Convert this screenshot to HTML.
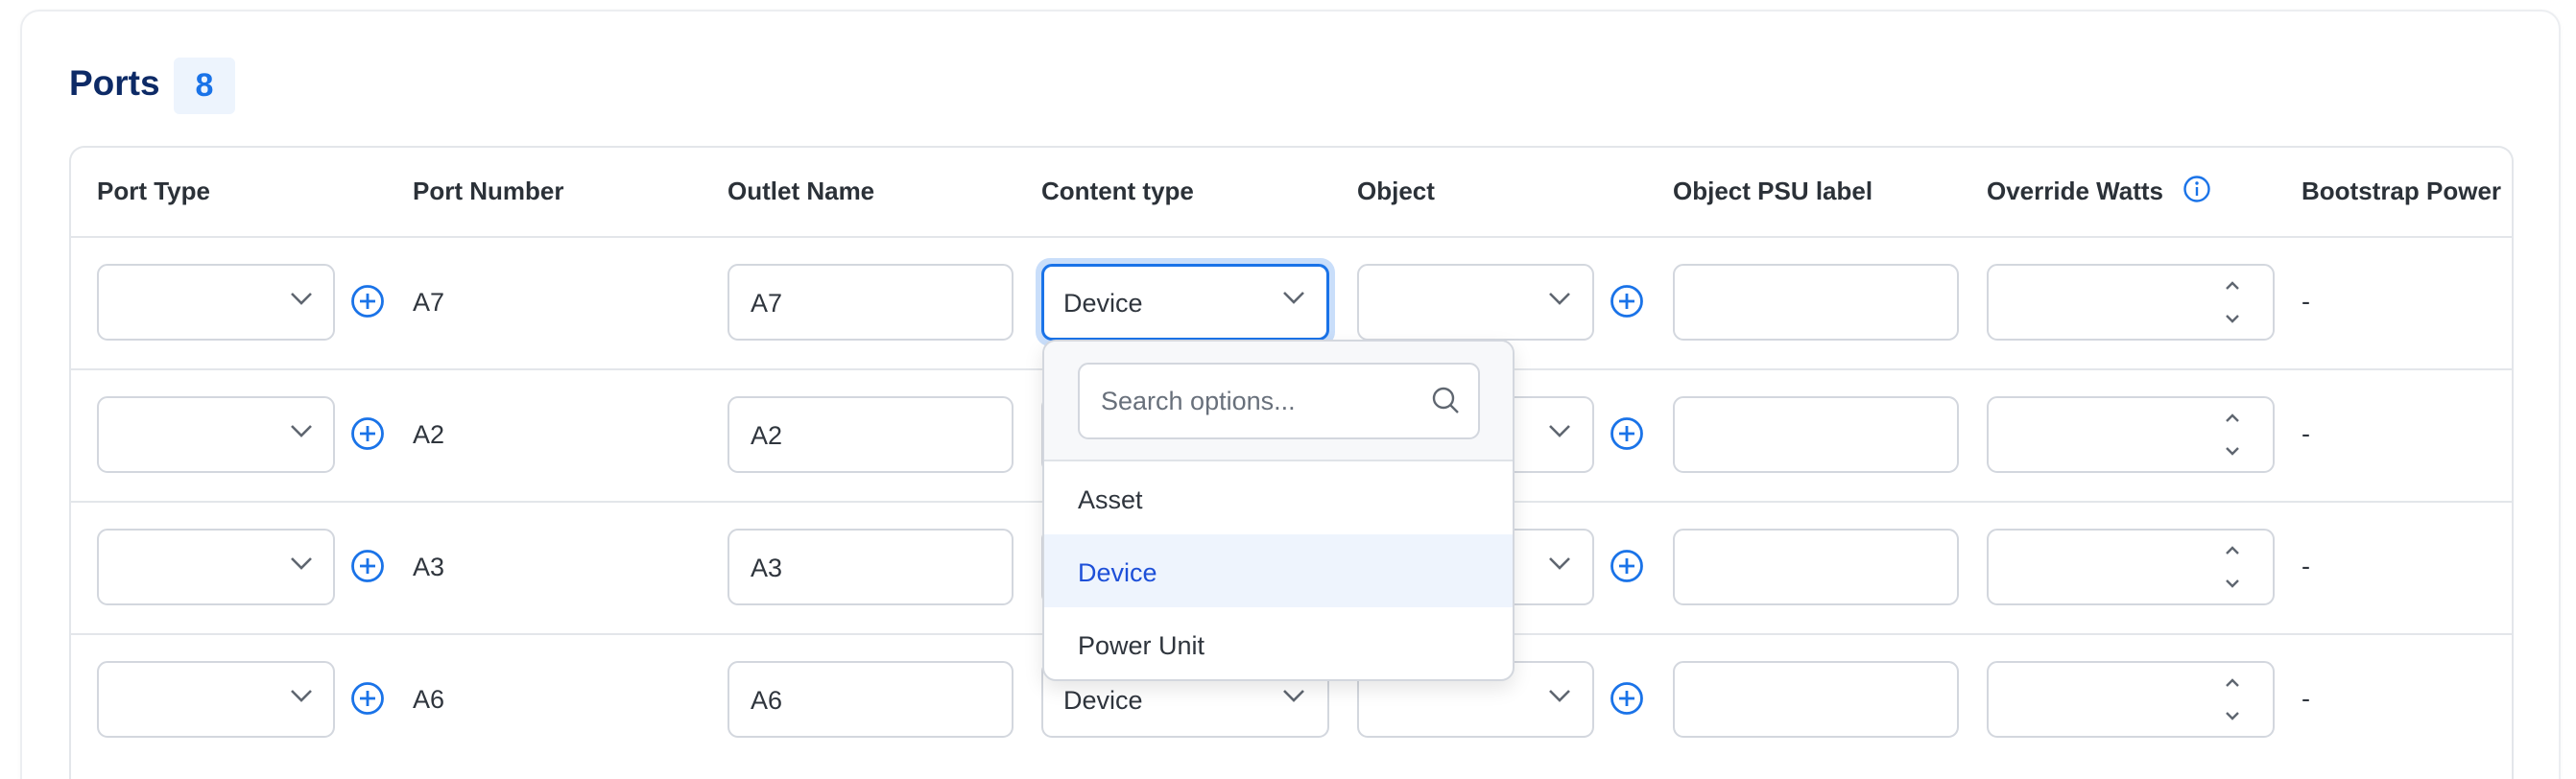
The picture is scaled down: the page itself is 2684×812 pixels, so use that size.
<!DOCTYPE html>
<html style="width:2684px;height:812px;overflow:hidden"><head><meta charset="utf-8"><style>
*{box-sizing:border-box;margin:0;padding:0}
body{width:2684px;height:812px;background:#fff;font-family:"Liberation Sans",Arial,sans-serif;position:relative;overflow:hidden;color:#374151}
.abs{position:absolute}
.card{left:21px;top:10px;width:2647px;height:802px;border:2px solid #eceef1;border-bottom:none;border-radius:20px 20px 0 0;box-shadow:0 1px 4px rgba(0,0,0,.04)}
.title{left:72px;top:66px;font-size:37px;font-weight:bold;color:#0d2a66}
.badge{left:181px;top:60px;width:64px;height:59px;background:#edf4fd;border-radius:6px;color:#1a73e8;font-weight:bold;font-size:34px;text-align:center;line-height:59px}
.table{left:72px;top:152px;width:2547px;height:660px;border:2px solid #e3e6ea;border-bottom:none;border-radius:16px 16px 0 0}
.hd{top:184px;font-size:26px;font-weight:bold;color:#2b3138}
.line{left:72px;width:2547px;height:2px;background:#e3e6ea}
.inp{border:2px solid #d3d7de;border-radius:11px;height:80px;background:#fff}
.chev{position:absolute;top:27px;width:24px;height:14px}
.txt{font-size:27px;color:#2f353d}
</style></head><body>
<div class="abs card"></div>
<div class="abs title">Ports</div>
<div class="abs badge">8</div>
<div class="abs table"></div>
<div class="abs hd" style="left:101px">Port Type</div>
<div class="abs hd" style="left:430px">Port Number</div>
<div class="abs hd" style="left:758px">Outlet Name</div>
<div class="abs hd" style="left:1085px">Content type</div>
<div class="abs hd" style="left:1414px">Object</div>
<div class="abs hd" style="left:1743px">Object PSU label</div>
<div class="abs hd" style="left:2070px">Override Watts</div>
<svg class="abs" style="left:2274px;top:182px" width="30" height="30" viewBox="0 0 30 30"><circle cx="15" cy="15" r="12.5" fill="none" stroke="#1a73e8" stroke-width="2.4"/><line x1="15" y1="13" x2="15" y2="22" stroke="#1a73e8" stroke-width="2.4"/><circle cx="15" cy="9" r="1.7" fill="#1a73e8"/></svg>
<div class="abs hd" style="left:2398px">Bootstrap Power</div>

<div class="abs line" style="top:246px"></div>
<div class="abs line" style="top:384px"></div>
<div class="abs line" style="top:522px"></div>
<div class="abs line" style="top:660px"></div>

<div id="rows"></div>
<script>
var rows=[[275,'A7','A7',''],[413,'A2','A2',''],[551,'A3','A3',''],[689,'A6','A6','Device']];
var chev='<svg class="chev" viewBox="0 0 24 14"><path d="M2 2 L12 12 L22 2" fill="none" stroke="#5f6670" stroke-width="2.6"/></svg>';
var plus='<svg width="36" height="36" viewBox="0 0 36 36"><circle cx="18" cy="18" r="15.5" fill="none" stroke="#1a73e8" stroke-width="2.8"/><path d="M18 10V26M10 18H26" stroke="#1a73e8" stroke-width="2.8"/></svg>';
var h='';
rows.forEach(function(r,i){
 var y=r[0];
 h+='<div class="abs inp" style="left:101px;top:'+y+'px;width:248px">'+chev.replace('class="chev"','class="chev" style="left:199px"')+'</div>';
 h+='<div class="abs" style="left:365px;top:'+(y+21)+'px">'+plus+'</div>';
 h+='<div class="abs txt" style="left:430px;top:'+(y+25)+'px">'+r[1]+'</div>';
 h+='<div class="abs inp" style="left:758px;top:'+y+'px;width:298px"><div class="txt" style="position:absolute;left:22px;top:24px">'+r[2]+'</div></div>';
 if(i==0){
  h+='<div class="abs" style="left:1079px;top:'+(y-6)+'px;width:312px;height:92px;border-radius:15px;background:#c9defa"></div>';
  h+='<div class="abs inp" style="left:1085px;top:'+y+'px;width:300px;border:3px solid #1a73e8"><div class="txt" style="position:absolute;left:20px;top:23px">Device</div>'+chev.replace('class="chev"','class="chev" style="left:248px;top:25px"')+'</div>';
 } else {
  h+='<div class="abs inp" style="left:1085px;top:'+y+'px;width:300px"><div class="txt" style="position:absolute;left:21px;top:24px">'+r[3]+'</div>'+chev.replace('class="chev"','class="chev" style="left:249px"')+'</div>';
 }
 h+='<div class="abs inp" style="left:1414px;top:'+y+'px;width:247px">'+chev.replace('class="chev"','class="chev" style="left:197px"')+'</div>';
 h+='<div class="abs" style="left:1677px;top:'+(y+21)+'px">'+plus+'</div>';
 h+='<div class="abs inp" style="left:1743px;top:'+y+'px;width:298px"></div>';
 h+='<div class="abs inp" style="left:2070px;top:'+y+'px;width:300px"><svg style="position:absolute;left:244px;top:14px" width="20" height="48" viewBox="0 0 20 48"><path d="M4 10L10 4L16 10" fill="none" stroke="#5f6670" stroke-width="2.4"/><path d="M4 38L10 44L16 38" fill="none" stroke="#5f6670" stroke-width="2.4"/></svg></div>';
 h+='<div class="abs txt" style="left:2398px;top:'+(y+24)+'px">-</div>';
});
document.getElementById('rows').innerHTML=h;
</script>

<div class="abs" style="left:1086px;top:354px;width:492px;height:356px;border:2px solid #d3d7de;border-radius:14px;background:#fff;box-shadow:0 8px 20px rgba(0,0,0,.10);overflow:hidden">
 <div style="position:absolute;left:0;top:0;width:100%;height:125px;background:#f7f8fa;border-bottom:2px solid #e0e3e8"></div>
 <div style="position:absolute;left:35px;top:22px;width:419px;height:80px;border:2px solid #d3d7de;border-radius:11px;background:#fff">
  <div style="position:absolute;left:22px;top:23px;font-size:27px;color:#68707b">Search options...</div>
  <svg style="position:absolute;left:366px;top:22px" width="32" height="32" viewBox="0 0 32 32"><circle cx="13" cy="13" r="10" fill="none" stroke="#5f6670" stroke-width="2.4"/><path d="M20.5 20.5L28 28" stroke="#5f6670" stroke-width="2.4"/></svg>
 </div>
 <div style="position:absolute;left:35px;top:150px;font-size:27px;color:#2f353d">Asset</div>
 <div style="position:absolute;left:0;top:201px;width:100%;height:76px;background:#eef4fd"></div>
 <div style="position:absolute;left:35px;top:226px;font-size:27px;color:#1d4fd8">Device</div>
 <div style="position:absolute;left:35px;top:302px;font-size:27px;color:#2f353d">Power Unit</div>
</div>
</body></html>
